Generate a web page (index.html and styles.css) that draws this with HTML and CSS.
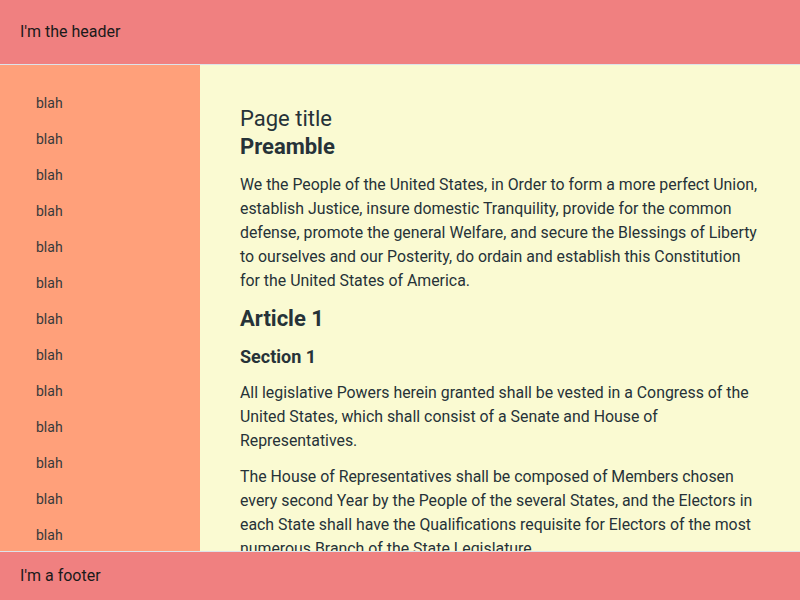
FILE: index.html
```html
<!DOCTYPE html>
<html lang="en">
<head>
<meta charset="utf-8">
<title>Layout</title>
<link rel="stylesheet" href="styles.css">
</head>
<body>
<div class="app">
  <header class="header">I'm the header</header>
  <div class="middle">
    <nav class="sidebar">
      <div class="item">blah</div>
      <div class="item">blah</div>
      <div class="item">blah</div>
      <div class="item">blah</div>
      <div class="item">blah</div>
      <div class="item">blah</div>
      <div class="item">blah</div>
      <div class="item">blah</div>
      <div class="item">blah</div>
      <div class="item">blah</div>
      <div class="item">blah</div>
      <div class="item">blah</div>
      <div class="item">blah</div>
      <div class="item">blah</div>
      <div class="item">blah</div>
    </nav>
    <main class="main">
      <div class="page-title">Page title</div>
      <h2 class="h-preamble">Preamble</h2>
      <p class="para">We the People of the United States, in Order to form a more perfect Union, establish Justice, insure domestic Tranquility, provide for the common defense, promote the general Welfare, and secure the Blessings of Liberty to ourselves and our Posterity, do ordain and establish this Constitution for the United States of America.</p>
      <h2 class="h-article">Article 1</h2>
      <h3 class="h-section">Section 1</h3>
      <p class="para">All legislative Powers herein granted shall be vested in a Congress of the United States, which shall consist of a Senate and House of Representatives.</p>
      <p class="para">The House of Representatives shall be composed of Members chosen every second Year by the People of the several States, and the Electors in each State shall have the Qualifications requisite for Electors of the most numerous Branch of the State Legislature.</p>
      <p class="para">No Person shall be a Representative who shall not have attained to the Age of twenty five Years, and been seven Years a Citizen of the United States, and who shall not, when elected, be an Inhabitant of that State in which he shall be chosen.</p>
    </main>
  </div>
  <footer class="footer">I'm a footer</footer>
</div>
</body>
</html>
```

FILE: styles.css
```css
* { box-sizing: border-box; }
html, body { margin: 0; padding: 0; height: 100%; }
body {
  font-family: Roboto, "Liberation Sans", sans-serif;
  color: #263238;
  overflow: hidden;
}
.app {
  display: flex;
  flex-direction: column;
  height: 100vh;
}
.header {
  flex: 0 0 65px;
  display: flex;
  align-items: center;
  padding: 0 20px 1px;
  background: #f08080;
  border-bottom: 1px solid #dde3ea;
  color: #1a1a1a;
  font-size: 16px;
}
.middle {
  flex: 1 1 auto;
  display: flex;
  min-height: 0;
}
.sidebar {
  flex: 0 0 200px;
  background: #ffa07a;
  padding: 20px 0 0 36px;
  overflow: hidden;
}
.item {
  height: 36px;
  line-height: 36px;
  font-size: 14px;
  color: #37393b;
}
.main {
  flex: 1 1 auto;
  background: #fafad2;
  padding: 40px 40px 40px 40px;
  overflow: hidden;
}
.page-title {
  font-size: 22px;
  line-height: 28px;
}
.h-preamble {
  margin: 0;
  font-size: 22px;
  line-height: 28px;
  font-weight: 700;
}
.h-article {
  margin: 12px 0 0;
  font-size: 22px;
  line-height: 28px;
  font-weight: 700;
}
.h-section {
  margin: 12px 0 0;
  font-size: 18px;
  line-height: 24px;
  font-weight: 700;
}
.para {
  margin: 12px 0 0;
  font-size: 15.87px;
  line-height: 24px;
}
.footer {
  flex: 0 0 49px;
  display: flex;
  align-items: center;
  padding: 0 20px 1px;
  background: #f08080;
  border-top: 1px solid #dde3ea;
  color: #1a1a1a;
  font-size: 16px;
}
```
